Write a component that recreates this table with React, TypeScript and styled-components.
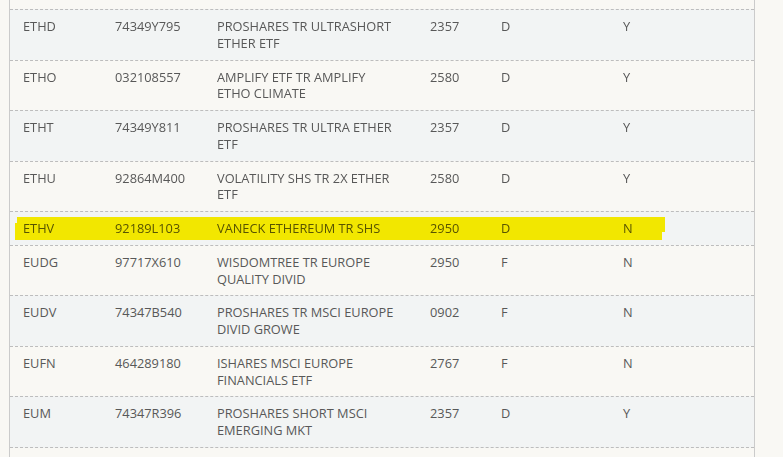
import styled, { createGlobalStyle } from "styled-components";

type Fund = {
  ticker: string;
  cusip: string;
  name: string;
  code: string;
  kind: string;
  flag: string;
  marked?: boolean;
};

const funds: Fund[] = [
  { ticker: "ETHD", cusip: "74349Y795", name: "PROSHARES TR ULTRASHORT\nETHER ETF", code: "2357", kind: "D", flag: "Y" },
  { ticker: "ETHO", cusip: "032108557", name: "AMPLIFY ETF TR AMPLIFY\nETHO CLIMATE", code: "2580", kind: "D", flag: "Y" },
  { ticker: "ETHT", cusip: "74349Y811", name: "PROSHARES TR ULTRA ETHER\nETF", code: "2357", kind: "D", flag: "Y" },
  { ticker: "ETHU", cusip: "92864M400", name: "VOLATILITY SHS TR 2X ETHER\nETF", code: "2580", kind: "D", flag: "Y" },
  { ticker: "ETHV", cusip: "92189L103", name: "VANECK ETHEREUM TR SHS", code: "2950", kind: "D", flag: "N", marked: true },
  { ticker: "EUDG", cusip: "97717X610", name: "WISDOMTREE TR EUROPE\nQUALITY DIVID", code: "2950", kind: "F", flag: "N" },
  { ticker: "EUDV", cusip: "74347B540", name: "PROSHARES TR MSCI EUROPE\nDIVID GROWE", code: "0902", kind: "F", flag: "N" },
  { ticker: "EUFN", cusip: "464289180", name: "ISHARES MSCI EUROPE\nFINANCIALS ETF", code: "2767", kind: "F", flag: "N" },
  { ticker: "EUM", cusip: "74347R396", name: "PROSHARES SHORT MSCI\nEMERGING MKT", code: "2357", kind: "D", flag: "Y" },
];

const App: React.FC = () => {
  return (
    <>
      <GlobalStyle />
      <Page>
        <Table>
          {funds.map((f, i) => (
            <Row key={f.ticker} shaded={i % 2 === 0}>
              <Cell>{f.ticker}</Cell>
              <Cell>{f.cusip}</Cell>
              <Cell>{f.name}</Cell>
              <Cell>{f.code}</Cell>
              <Cell>{f.kind}</Cell>
              <Cell>{f.flag}</Cell>
              {f.marked && <Marker />}
            </Row>
          ))}
        </Table>
      </Page>
    </>
  );
};

const GlobalStyle = createGlobalStyle`
  html, body {
    margin: 0;
    padding: 0;
    background: #f9f8f4;
  }
  body {
    font-family: "Open Sans", "Liberation Sans", sans-serif;
    font-size: 12.8px;
    color: #585858;
  }
`;

const Page = styled.div`
  width: 783px;
  height: 457px;
  overflow: hidden;
  padding-left: 9px;
  box-sizing: border-box;
`;

const Table = styled.div`
  width: 746px;
  min-height: 457px;
  box-sizing: border-box;
  border-left: 1px solid #cbcbcb;
  border-right: 1px solid #cbcbcb;
  padding-top: 9px;
`;

const Row = styled.div<{ shaded: boolean }>`
  position: relative;
  display: grid;
  grid-template-columns: 92px 102px 213px 71px 122px 1fr;
  padding: 8px 0 8px 13px;
  border-top: 1px dashed #bdbdbd;
  background: ${(p) => (p.shaded ? "#f2f4f4" : "#f9f8f4")};
  &:last-child {
    border-bottom: 1px dashed #bdbdbd;
  }
`;

const Cell = styled.div`
  line-height: 16.75px;
  white-space: pre-line;
`;

// hand-drawn highlighter stroke over the ETHV row
const Marker = styled.div`
  position: absolute;
  left: 5px;
  top: 5px;
  width: 650px;
  height: 23px;
  background: #fff200;
  mix-blend-mode: multiply;
  clip-path: polygon(0 6px, 2px 6px, 2px 0, 100% 0, 100% 15px, 647px 15px, 647px 100%, 0 100%);
  pointer-events: none;
`;

export default App;
